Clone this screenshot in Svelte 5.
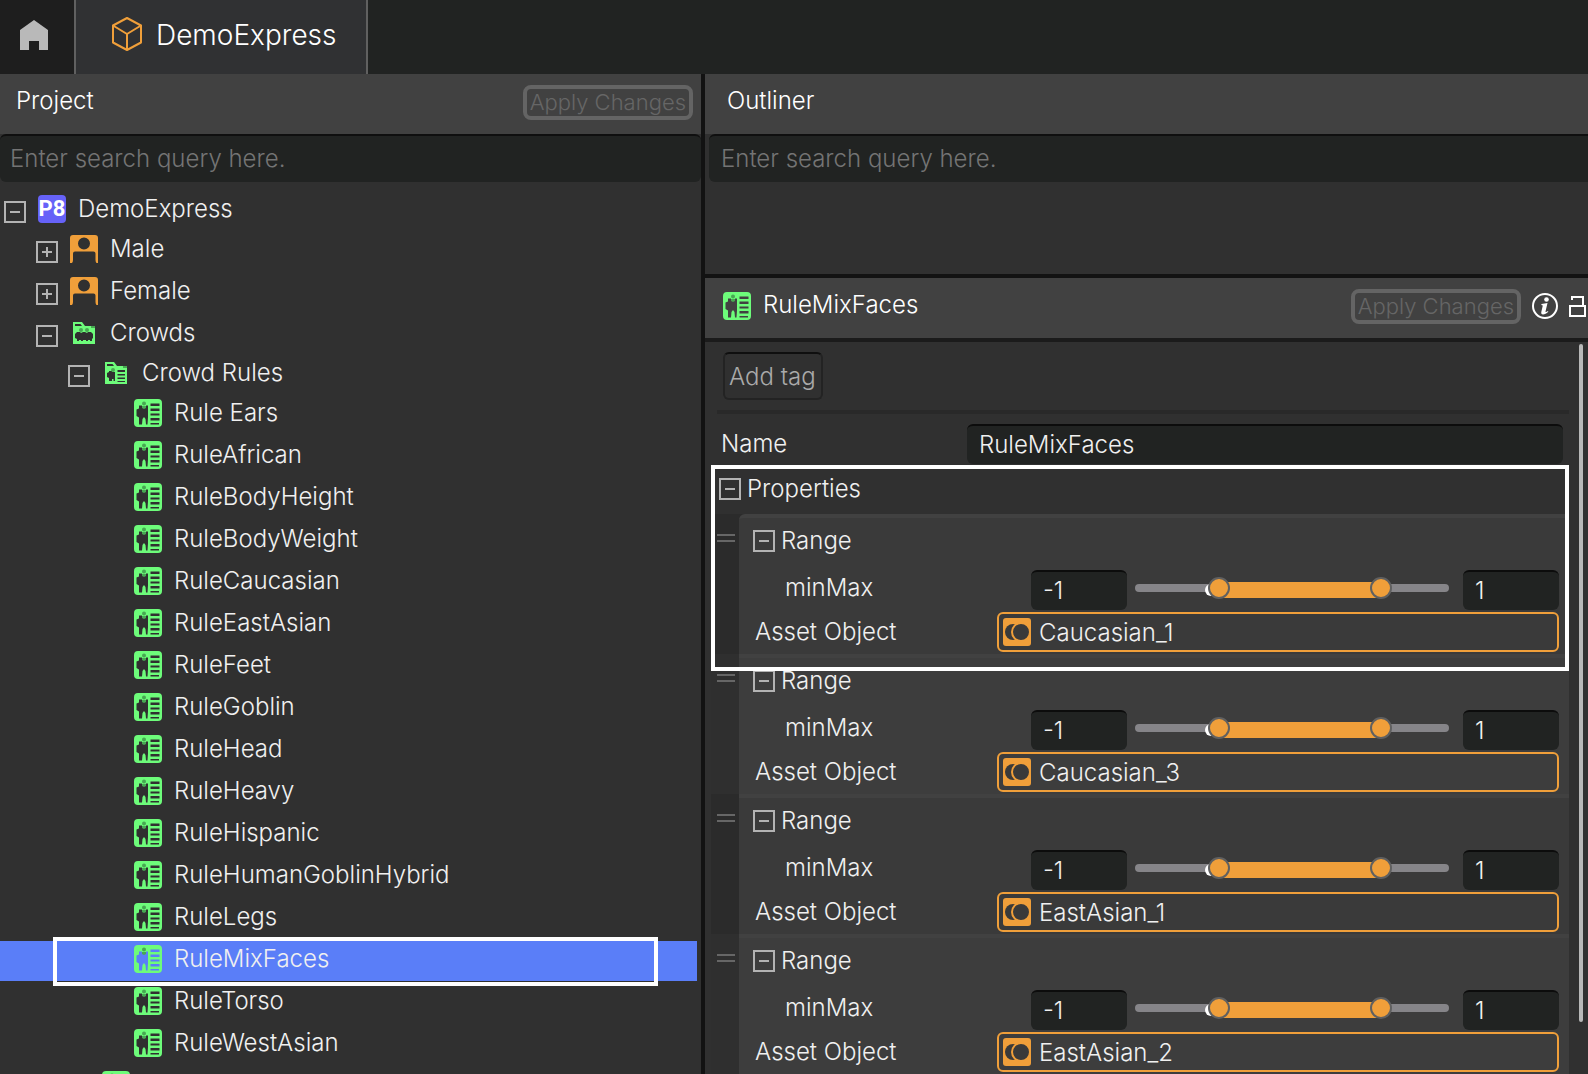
<script>
  const rules = [
    'Rule Ears',
    'RuleAfrican',
    'RuleBodyHeight',
    'RuleBodyWeight',
    'RuleCaucasian',
    'RuleEastAsian',
    'RuleFeet',
    'RuleGoblin',
    'RuleHead',
    'RuleHeavy',
    'RuleHispanic',
    'RuleHumanGoblinHybrid',
    'RuleLegs',
    'RuleMixFaces',
    'RuleTorso',
    'RuleWestAsian'
  ];

  let selected = $state('RuleMixFaces');
  let ruleName = $state('RuleMixFaces');

  let ranges = $state([
    { min: '-1', max: '1', low: 25, high: 80.5, asset: 'Caucasian_1' },
    { min: '-1', max: '1', low: 25, high: 80.5, asset: 'Caucasian_3' },
    { min: '-1', max: '1', low: 25, high: 80.5, asset: 'EastAsian_1' },
    { min: '-1', max: '1', low: 25, high: 80.5, asset: 'EastAsian_2' }
  ]);

  // thumbs are 22px wide, so their centres travel over 100% - 22px
  const fillStyle = (r) =>
    `left: calc(11px + (100% - 22px) * ${r.low / 100}); width: calc((100% - 22px) * ${(r.high - r.low) / 100})`;
</script>

{#snippet toggle(open, label)}
  <button class="toggle" aria-expanded={open} aria-label={label}>
    <svg viewBox="0 0 22 22" width="22" height="22">
      <rect x="1" y="1" width="20" height="20" />
      <path d={open ? 'M6 11h10' : 'M6 11h10M11 6v10'} />
    </svg>
  </button>
{/snippet}

{#snippet ruleIcon()}
  <svg class="icon" viewBox="0 0 28 28" width="28" height="28" aria-hidden="true">
    <path
      fill="#6dfc7a"
      fill-rule="evenodd"
      d="M4 0h20a4 4 0 0 1 4 4v20a4 4 0 0 1-4 4H4a4 4 0 0 1-4-4V4a4 4 0 0 1 4-4z
        M5 6.500h3v2h4v-2h2v12l-.5 7h-1.500l-.5-5.500l-1.500-2l-1.500 2l-.5 5.500H5v-7L2.500 17v-6.500l2.500-1z
        M16.500 4.500h9v2.500h-9z M16.500 9.500h9v2.500h-9z M16.500 14.500h9v2h-9z M16.500 19h9v2.500h-9z M16.500 24h8.500v1.500h-8.500z"
    />
    <circle cx="10" cy="4.500" r="2" fill="#47a852" />
    <path fill="#47a852" d="M8 7h4v2l-2 1l-2-1z" />
  </svg>
{/snippet}

{#snippet personIcon()}
  <svg class="icon" viewBox="0 0 28 28" width="28" height="28" aria-hidden="true">
    <path
      fill="#f09f3a"
      fill-rule="evenodd"
      d="M3 0h22a3 3 0 0 1 3 3v25h-1.500q-1-1-1-3V18.500a2 2 0 0 0-2-2H5a2 2 0 0 0-2 2V25q0 2-1 3H0V3a3 3 0 0 1 3-3z
        M14 2.500a6 6 0 1 0 0 12a6 6 0 1 0 0-12z"
    />
  </svg>
{/snippet}

<div class="app">
  <nav class="tabs">
    <a class="home" href="#home" aria-label="Home">
      <svg viewBox="0 0 28 30" width="28" height="30">
        <path fill="#b9b9b9" d="M14 0l14 10v20h-9v-9H9v9H0V10z" />
      </svg>
    </a>
    <a class="tab" href="#project">
      <svg viewBox="0 0 30 34" width="30" height="34" fill="none" stroke="#f09f3a" stroke-width="2" stroke-linejoin="round">
        <path d="M15 1l14 7.500v17L15 33L1 25.500v-17zM1 8.500L15 17l14-8.500M15 17v16" />
      </svg>
      <span>DemoExpress</span>
    </a>
  </nav>

  <div class="panes">
    <aside class="project">
      <header>
        <h2>Project</h2>
        <button class="apply" disabled>Apply Changes</button>
      </header>
      <input class="search" type="search" placeholder="Enter search query here." aria-label="Search project" />

      <ul class="tree">
        <li>
          <div class="row level0">
            {@render toggle(true, 'Collapse DemoExpress')}
            <b class="badge">P8</b>
            <span>DemoExpress</span>
          </div>
          <ul>
            {#each ['Male', 'Female'] as name}
              <li>
                <div class="row level1">
                  {@render toggle(false, `Expand ${name}`)}
                  {@render personIcon()}
                  <span>{name}</span>
                </div>
              </li>
            {/each}
            <li>
              <div class="row level1">
                {@render toggle(true, 'Collapse Crowds')}
                <svg class="icon folder" viewBox="0 0 22 22" width="22" height="22">
                  <path fill="#6dfc7a" fill-rule="evenodd" d="M0 0h9l3 4h10v18H0z M2 2v2h7L7.500 2z M2 12l2-2h3l1 1l2-1h2l2 1l1-1h3l2 2v4l-1 1v2h-2v-1h-2v1h-2v-1h-3v1h-2v-1H6v1H4v-2l-2-1z" />
                  <g fill="#47a852">
                    <circle cx="8" cy="8" r="2" />
                    <circle cx="14" cy="8" r="2" />
                    <path d="M18 4h4v2h-4z" />
                  </g>
                </svg>
                <span>Crowds</span>
              </div>
              <ul>
                <li>
                  <div class="row level2">
                    {@render toggle(true, 'Collapse Crowd Rules')}
                    <svg class="icon folder" viewBox="0 0 22 22" width="22" height="22">
                      <path fill="#6dfc7a" fill-rule="evenodd" d="M0 0h9l3 4h10v18H0z M2 2v2h7L7.500 2z M4 9h3v1h3v9H8.500v-2H7v2H4v-3l-2-1v-4l2-1z M12.500 8h7.500v2h-7.500z M12.500 12h7.500v1.500h-7.500z M12.500 15.500h7.500v1.500h-7.500z M12.500 19h7.500v1h-7.500z" />
                      <g fill="#47a852">
                        <circle cx="8" cy="8" r="2" />
                        <path d="M18 4h4v2h-4z" />
                      </g>
                    </svg>
                    <span>Crowd Rules</span>
                  </div>
                  <ul>
                    {#each rules as rule}
                      <li>
                        <button class="row level3" class:selected={rule === selected} onclick={() => (selected = rule)}>
                          {@render ruleIcon()}
                          <span>{rule}</span>
                        </button>
                      </li>
                    {/each}
                  </ul>
                </li>
                <li>
                  <div class="row level2 leaf">
                    {@render ruleIcon()}
                  </div>
                </li>
              </ul>
            </li>
          </ul>
        </li>
      </ul>
    </aside>

    <main>
      <section class="outliner">
        <header>
          <h2>Outliner</h2>
        </header>
        <input class="search" type="search" placeholder="Enter search query here." aria-label="Search outliner" />
      </section>

      <section class="inspector">
        <header>
          {@render ruleIcon()}
          <h2>RuleMixFaces</h2>
          <button class="apply" disabled>Apply Changes</button>
          <button class="tool" aria-label="Info">
            <svg viewBox="0 0 26 26" width="26" height="26">
              <circle cx="13" cy="13" r="12" fill="none" stroke="#fff" stroke-width="2" />
              <circle cx="14.500" cy="6.500" r="2.300" fill="#fff" />
              <path fill="#fff" d="M9.500 11l6-1l-2 8.500c0 1 1 .5 2.500-.5l.3.800c-2 2-3.500 2.700-5.300 2.700c-1.500 0-2-1-1.700-2.500l1.500-6.500l-1.500-.5z" />
            </svg>
          </button>
          <button class="tool" aria-label="Lock">
            <svg viewBox="0 0 17 21" width="17" height="21" fill="none" stroke="#fff" stroke-width="2">
              <path d="M1 10h15v10H1zM3 4V1h11v9" />
            </svg>
          </button>
        </header>

        <div class="scroller">
          <div class="content">
            <button class="add-tag">Add tag</button>
            <div class="name">
              <label for="rule-name">Name</label>
              <input class="field" id="rule-name" bind:value={ruleName} />
            </div>

            <div class="properties">
              <div class="heading">
                {@render toggle(true, 'Collapse Properties')}
                <span>Properties</span>
              </div>
              {#each ranges as range, i}
                <div class="item">
                  <div class="handle"></div>
                  <div class="card">
                    <div class="range-title">
                      {@render toggle(true, 'Collapse Range')}
                      <span>Range</span>
                    </div>
                    <div class="line minmax">
                      <label for="min-{i}">minMax</label>
                      <input class="field" id="min-{i}" bind:value={range.min} />
                      <div class="slider">
                        <div class="fill" style={fillStyle(range)}></div>
                        <input type="range" step="any" bind:value={range.low} aria-label="Range minimum" />
                        <input type="range" step="any" bind:value={range.high} aria-label="Range maximum" />
                      </div>
                      <input class="field" bind:value={range.max} aria-label="Maximum" />
                    </div>
                    <div class="line">
                      <span class="label" id="asset-{i}">Asset Object</span>
                      <button class="asset" aria-describedby="asset-{i}">
                        <svg viewBox="0 0 28 28" width="28" height="28">
                          <rect width="28" height="28" rx="3" fill="#f09f3a" />
                          <circle cx="10" cy="14" r="8" fill="#3a3a3a" />
                          <circle cx="18" cy="14" r="9" fill="#3a3a3a" stroke="#f09f3a" stroke-width="2" />
                        </svg>
                        <span>{range.asset}</span>
                      </button>
                    </div>
                  </div>
                </div>
              {/each}
              <div class="marker"></div>
            </div>
          </div>
          <div class="scrollbar"></div>
        </div>
      </section>
    </main>
  </div>
</div>

<style>
  :global(body) {
    margin: 0;
    background: #303030;
  }

  .app {
    display: flex;
    flex-direction: column;
    height: 100vh;
    overflow: hidden;
    color: #f0f0f0;
    background: #303030;
    font-family: Inter, 'Liberation Sans', sans-serif;
    font-size: 24px;
    font-weight: 300;
    line-height: 30px;
  }

  button,
  input {
    box-sizing: border-box;
    margin: 0;
    padding: 0;
    border: 0;
    background: none;
    color: inherit;
    font: inherit;
  }

  svg {
    display: block;
    flex: none;
  }

  ul {
    margin: 0;
    padding: 0;
    list-style: none;
    display: flex;
    flex-direction: column;
    gap: 2px;
  }

  /* top tabs */
  .tabs {
    display: flex;
    flex: none;
    height: 74px;
    background: #212322;
  }

  .home {
    display: flex;
    align-items: center;
    justify-content: center;
    width: 68px;
    padding: 0 6px 4px 0;
    background: #1e1e1e;
    border-right: 2px solid #606060;
  }

  .tab {
    display: flex;
    align-items: center;
    gap: 14px;
    padding: 0 29px 6px 36px;
    background: #303133;
    border-right: 2px solid #606060;
    color: #fff;
    font-size: 28px;
    text-decoration: none;
  }

  .tab span {
    padding-top: 2px;
  }

  /* panes */
  .panes {
    display: flex;
    flex: 1;
    min-height: 0;
  }

  .project {
    flex: 0 0 701px;
    overflow: hidden;
    border-right: 4px solid #121212;
  }

  main {
    display: flex;
    flex: 1;
    flex-direction: column;
    min-width: 0;
  }

  header {
    display: flex;
    align-items: center;
    box-sizing: border-box;
    height: 60px;
    padding: 0 8px 4px 16px;
    background: #414141;
  }

  h2 {
    flex: 1;
    margin: 0;
    padding-bottom: 2px;
    color: #fff;
    font-size: 24px;
    font-weight: 300;
  }

  .apply {
    height: 35px;
    padding: 0 3px;
    border: 4px solid #646464;
    border-radius: 8px;
    color: #666;
    font-size: 22px;
    line-height: 27px;
  }

  .search {
    display: block;
    width: 100%;
    height: 48px;
    padding: 0 10px 2px;
    background: #212322;
    border-top: 2px solid #0f0f0f;
    border-radius: 6px;
    appearance: none;
  }

  .search::placeholder {
    color: #747474;
  }

  .tree {
    padding-top: 9px;
  }

  .row {
    display: flex;
    align-items: center;
    width: calc(100% - 4px);
    height: 40px;
    box-sizing: border-box;
    text-align: left;
  }

  .row span {
    padding-bottom: 4px;
  }

  .row .toggle {
    margin: 2px 12px 0 0;
  }

  .icon,
  .badge {
    margin: 0 12px 4px 0;
  }

  .badge {
    width: 28px;
    height: 28px;
    border-radius: 4px;
    background: #6662f8;
    color: #fff;
    font-family: Roboto, sans-serif;
    font-size: 22px;
    font-weight: 700;
    line-height: 28px;
    text-align: center;
  }

  .folder {
    margin: 0 15px 4px 3px;
  }

  .level0 {
    padding-left: 4px;
  }

  .level1 {
    padding-left: 36px;
  }

  .level2 {
    padding-left: 68px;
  }

  .leaf {
    padding-left: 102px;
  }

  .level3 {
    padding-left: 134px;
  }

  .selected {
    position: relative;
    background: #5a7ef8;
  }

  .selected::after {
    content: '';
    position: absolute;
    inset: -4px 39px -5px 53px;
    border: 4px solid #fff;
  }

  .toggle {
    flex: none;
  }

  .toggle svg {
    fill: none;
    stroke: #b3b3b3;
    stroke-width: 2;
  }

  /* right side */
  .outliner {
    flex: none;
    height: 200px;
    border-bottom: 4px solid #121212;
  }

  .outliner header {
    padding-left: 22px;
  }

  .outliner .search {
    width: calc(100% - 4px);
    margin-left: 4px;
    padding-left: 12px;
    border-radius: 6px 0 0 6px;
  }

  .inspector {
    display: flex;
    flex: 1;
    flex-direction: column;
    min-height: 0;
  }

  .inspector header {
    flex: none;
    height: 64px;
    padding: 0 2px 4px 18px;
    border-bottom: 4px solid #1b1b1b;
  }

  .inspector header .icon {
    margin: 0 12px 0 0;
  }

  .tool {
    margin-left: 11px;
  }

  .scroller {
    display: flex;
    flex: 1;
    min-height: 0;
  }

  .content {
    flex: 1;
    min-width: 0;
    padding: 10px 0 0 6px;
    overflow: hidden;
  }

  .scrollbar {
    width: 4px;
    margin: 2px 5px 52px 10px;
    border-radius: 2px;
    background: #b8b8b8;
  }

  .add-tag {
    display: block;
    height: 48px;
    margin-left: 12px;
    padding: 2px 5px 0 4px;
    border: 2px solid #232323;
    border-top-color: #0f0f0f;
    border-radius: 6px;
    color: #aaa;
  }

  .name {
    display: flex;
    align-items: center;
    margin: 10px 0 0 6px;
    padding: 10px 6px 0 4px;
    border-top: 4px solid #292929;
  }

  .name label {
    width: 246px;
  }

  .field {
    height: 40px;
    padding: 0 12px 2px;
    background: #212322;
    border-top: 2px solid #0c0c0c;
    border-radius: 6px;
  }

  .name .field {
    flex: 1;
  }

  .properties {
    position: relative;
  }

  .heading {
    display: flex;
    align-items: center;
    gap: 6px;
    height: 50px;
    padding-left: 8px;
  }

  .item {
    display: flex;
    background: #2f2f2f;
  }

  .item:nth-child(even) {
    background: #2b2b2b;
  }

  .handle {
    width: 18px;
    height: 4px;
    margin: 20px 4px 0 6px;
    border-top: 2px solid #666;
    border-bottom: 2px solid #666;
  }

  .card {
    flex: 1;
    min-width: 0;
    padding: 0 10px 2px 14px;
    background: #3d3d3d;
    border-top: 4px solid #414141;
  }

  .item:nth-child(even) .card {
    background: #3a3a3a;
  }

  .item:nth-child(2) .card {
    border-top-left-radius: 6px;
  }

  .range-title {
    display: flex;
    align-items: center;
    gap: 6px;
    height: 46px;
    margin-bottom: 6px;
  }

  .line {
    display: flex;
    align-items: center;
    height: 40px;
  }

  .line label,
  .label {
    width: 242px;
    padding-left: 2px;
  }

  .minmax {
    margin-bottom: 2px;
  }

  .minmax label {
    width: 246px;
    padding: 0 0 5px 32px;
  }

  .line .field {
    width: 96px;
  }

  .slider {
    position: relative;
    flex: 1;
    height: 8px;
    margin: 0 14px 4px 8px;
    border-radius: 4px;
    background: #868589;
  }

  .slider input {
    position: absolute;
    inset: -7px 0;
    width: 100%;
    height: 22px;
    appearance: none;
    pointer-events: none;
  }

  .slider input::-webkit-slider-thumb {
    width: 22px;
    height: 22px;
    box-sizing: border-box;
    border: 2px solid #606060;
    border-radius: 50%;
    background: #f09f3a;
    appearance: none;
    pointer-events: auto;
  }

  .fill {
    position: absolute;
    top: -2px;
    height: 16px;
    background: #f09f3a;
  }

  .fill::before {
    content: '';
    position: absolute;
    top: 2px;
    left: -14px;
    width: 12px;
    height: 12px;
    border-radius: 6px;
    background: #fff;
  }

  .asset {
    display: flex;
    flex: 1;
    align-items: center;
    gap: 8px;
    height: 40px;
    padding-left: 4px;
    border: 2px solid #f09f3a;
    border-radius: 6px;
  }

  .asset span {
    padding-top: 2px;
  }

  .marker {
    position: absolute;
    top: 1px;
    left: 0;
    right: 0;
    height: 198px;
    border: 4px solid #fff;
    pointer-events: none;
  }
</style>
